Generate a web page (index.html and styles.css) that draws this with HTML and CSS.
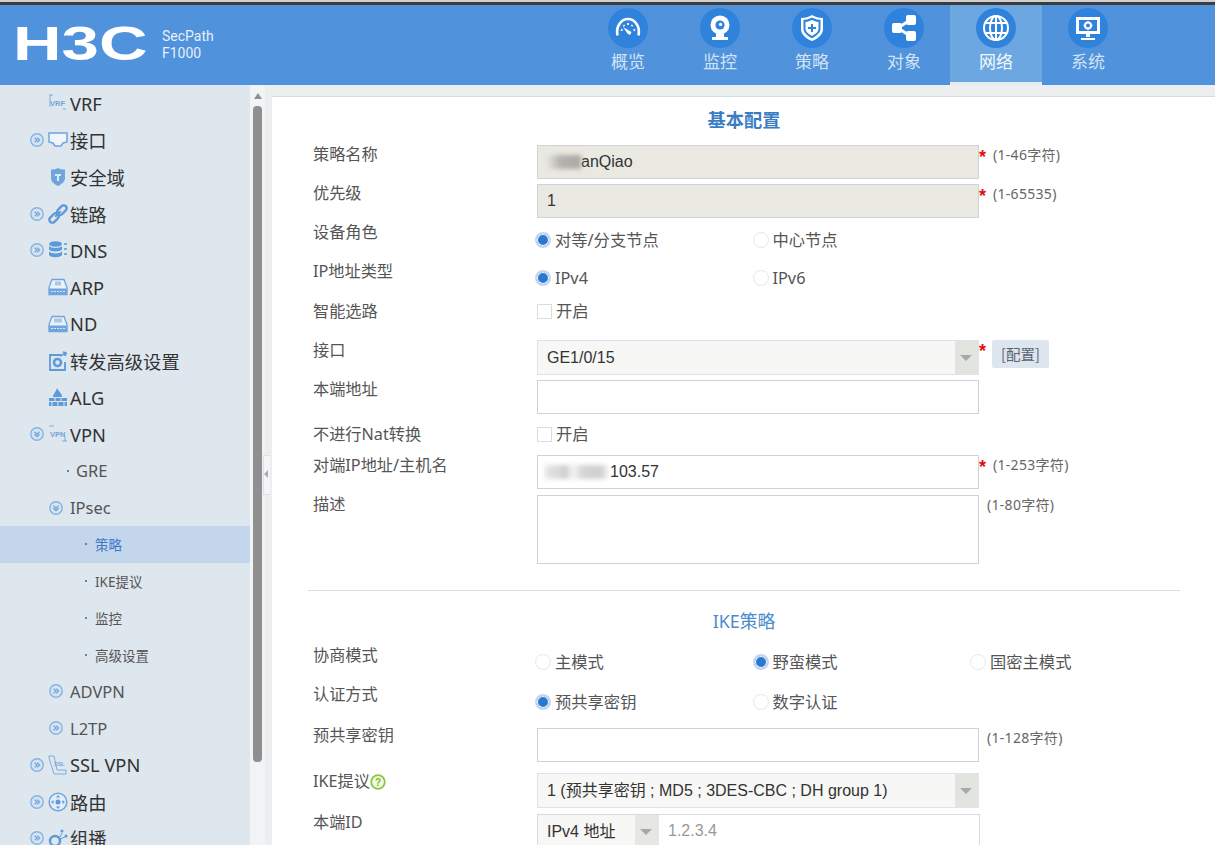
FILE: index.html
```html
<!DOCTYPE html>
<html lang="zh-CN">
<head>
  <meta charset="UTF-8" />
  <title>H3C SecPath F1000</title>
  <link rel="stylesheet" href="styles.css">
</head>
<body>
  <svg class="defs" width="0" height="0">
    <symbol id="exp-closed" viewBox="0 0 14 14">
      <circle cx="7" cy="7" r="6.2" fill="#d5e3f2" stroke="#86b4e2" stroke-width="1.4"/>
      <path d="M4.6 4.6 7 7l-2.4 2.4M7.2 4.6 9.6 7l-2.4 2.4" fill="none" stroke="#6fa5dc" stroke-width="1.3"/>
    </symbol>
    <symbol id="exp-open" viewBox="0 0 14 14">
      <circle cx="7" cy="7" r="6.2" fill="#d5e3f2" stroke="#86b4e2" stroke-width="1.4"/>
      <path d="M4.4 4.8 7 7.2l2.6-2.4M4.4 7.2 7 9.6l2.6-2.4" fill="none" stroke="#6fa5dc" stroke-width="1.3"/>
    </symbol>
  </svg>

  <header class="topbar">
    <div class="logo">
      <div class="logo-mark"><span>H3C</span></div>
      <div class="logo-model">SecPath<br>F1000</div>
    </div>
    <nav class="nav">
      <a class="nav-item">
        <span class="nav-icon"><svg viewBox="0 0 28 28" width="28" height="28"><path d="M3.500 21.500C1.500 12 7.500 5 14 5s12.500 7 10.500 16.500" fill="none" stroke="#fff" stroke-width="2.600"/><path d="M7 15.500l1.500 1M9.500 11l1 1.200M14 9v2M18.500 11l-1 1.200M21 15.500l-1.500 1" stroke="#fff" stroke-width="1.800"/><path d="M9 13l8.500 5-1.500 3-2.500-1.500z" fill="#fff"/></svg></span>
        <span class="nav-text">概览</span>
      </a>
      <a class="nav-item">
        <span class="nav-icon"><svg viewBox="0 0 28 28" width="28" height="28"><circle cx="14" cy="11" r="9.500" fill="#fff"/><circle cx="14" cy="11" r="4.600" fill="#2f83dc"/><circle cx="14.600" cy="10.400" r="1.700" fill="#fff"/><path d="M10 20h8v3h4v3H6v-3h4z" fill="#fff"/></svg></span>
        <span class="nav-text">监控</span>
      </a>
      <a class="nav-item">
        <span class="nav-icon"><svg viewBox="0 0 28 28" width="28" height="28"><path d="M14 1c3 2 7 3 11 3v11c0 6-6 10-11 12C9 25 3 21 3 15V4c4 0 8-1 11-3z" fill="#fff"/><path d="M14 3.500c3 1.600 5.500 2.300 8.500 2.500V15c0 4-4.500 7-8.500 9.300C10 22 5.500 19 5.500 15V6c3-.2 5.500-.9 8.500-2.500z" fill="#2f83dc"/><path d="M14 6c2.500 1.200 4 1.700 6.500 2v7c0 3-3.500 5.200-6.500 7-3-1.800-6.500-4-6.500-7V8c2.500-.3 4-.8 6.500-2z" fill="#fff"/><path d="M14 10v8M10 14h8" stroke="#2f83dc" stroke-width="2"/></svg></span>
        <span class="nav-text">策略</span>
      </a>
      <a class="nav-item">
        <span class="nav-icon"><svg viewBox="0 0 28 28" width="28" height="28"><path d="M8 14 20 6M8 14l12 8" stroke="#fff" stroke-width="3"/><rect x="2" y="9" width="10" height="10" rx="2" fill="#fff"/><rect x="16" y="1" width="10" height="10" rx="2" fill="#fff"/><rect x="16" y="17" width="10" height="10" rx="2" fill="#fff"/></svg></span>
        <span class="nav-text">对象</span>
      </a>
      <a class="nav-item active">
        <span class="nav-icon"><svg viewBox="0 0 28 28" width="28" height="28" fill="none" stroke="#fff" stroke-width="2"><circle cx="14" cy="14" r="12"/><ellipse cx="14" cy="14" rx="6" ry="12"/><path d="M14 2v24M3.500 9h21M3.500 19h21"/></svg></span>
        <span class="nav-text">网络</span>
      </a>
      <a class="nav-item">
        <span class="nav-icon"><svg viewBox="0 0 28 28" width="28" height="28"><path d="M2 3h24v17H2z" fill="#fff"/><path d="M5 6h18v11H5z" fill="#2f83dc"/><path d="M12 20h4v3h-4zM7 24h14v2H7z" fill="#fff"/><circle cx="14" cy="11.500" r="3" fill="none" stroke="#fff" stroke-width="2"/><path d="M14 7v2M14 14v2M9.500 11.500h2M16.500 11.500h2" stroke="#fff" stroke-width="1.500"/></svg></span>
        <span class="nav-text">系统</span>
      </a>
    </nav>
  </header>

  <div class="body-wrap">
    <aside class="sidebar">
      <div class="item lv1">
        <span class="exp"></span>
        <svg class="ico" viewBox="0 0 20 20"><path d="M1 2h4M15 16h3M2 2v12" stroke="#7fadd8" fill="none"/><text x="2" y="13" class="ico-txt">VRF</text></svg>
        <span>VRF</span>
      </div>
      <div class="item lv1">
        <svg class="exp"><use href="#exp-closed"/></svg>
        <svg class="ico" viewBox="0 0 20 20"><path d="M1 3h18v9l-4 1-2 3H7l-2-3-4-1z" fill="#f0f5fa" stroke="#6fa5dc" stroke-width="1.500"/></svg>
        <span>接口</span>
      </div>
      <div class="item lv1">
        <span class="exp"></span>
        <svg class="ico" viewBox="0 0 20 20"><path d="M10 1c2 1 4 1.500 7 1.500V11c0 4-4 6.500-7 8-3-1.500-7-4-7-8V2.500C6 2.500 8 2 10 1z" fill="#6fa5dc"/><path d="M7 7h6v2h-2v5H9V9H7z" fill="#dce8f4"/></svg>
        <span>安全域</span>
      </div>
      <div class="item lv1">
        <svg class="exp"><use href="#exp-closed"/></svg>
        <svg class="ico" viewBox="0 0 20 20" fill="none" stroke="#5d9ad8" stroke-width="2.400"><g transform="rotate(-45 10 10)"><rect x="-1" y="7" width="11" height="6" rx="3"/><rect x="10" y="7" width="11" height="6" rx="3"/><path d="M6 10h8" stroke-width="2"/></g></svg>
        <span>链路</span>
      </div>
      <div class="item lv1">
        <svg class="exp"><use href="#exp-closed"/></svg>
        <svg class="ico" viewBox="0 0 20 20"><ellipse cx="7.500" cy="4" rx="6.500" ry="2.800" fill="#5d9ad8"/><path d="M1 6c2 2.500 11 2.500 13 0v3.500c-2 2.500-11 2.500-13 0zM1 11.500c2 2.500 11 2.500 13 0V15c-2 3-11 3-13 0z" fill="#5d9ad8"/><path d="M16 3h3v2h-3zM16 8h3v2h-3zM16 13h3v2h-3z" fill="#7fadd8"/></svg>
        <span>DNS</span>
      </div>
      <div class="item lv1">
        <span class="exp"></span>
        <svg class="ico" viewBox="0 0 20 20"><path d="M4 2.500h12l3 8v7H1v-7z" fill="#eaf1f8" stroke="#6fa5dc" stroke-width="1.300"/><path d="M7 4.500h6v4H7z" fill="#a9c8e8"/><path d="M1 11.500h18v6H1z" fill="#6fa5dc"/><path d="M3 14.500h14" stroke="#dce8f4" stroke-dasharray="2 1"/></svg>
        <span>ARP</span>
      </div>
      <div class="item lv1">
        <span class="exp"></span>
        <svg class="ico" viewBox="0 0 20 20"><path d="M4 2.500h12l3 8v7H1v-7z" fill="#eaf1f8" stroke="#6fa5dc" stroke-width="1.300"/><path d="M6 4.500h8v4H6z" fill="#a9c8e8"/><path d="M1 11.500h18v6H1z" fill="#6fa5dc"/><path d="M3 14.500h14" stroke="#dce8f4" stroke-dasharray="2 1"/></svg>
        <span>ND</span>
      </div>
      <div class="item lv1">
        <span class="exp"></span>
        <svg class="ico" viewBox="0 0 20 20" fill="none" stroke="#5d9ad8" stroke-width="1.800"><path d="M13 4H2v15h15v-8"/><path d="M12 5l6-3M15 1l3 1-1 3"/><circle cx="9.500" cy="11.500" r="3.500" stroke-width="2.600"/></svg>
        <span>转发高级设置</span>
      </div>
      <div class="item lv1">
        <span class="exp"></span>
        <svg class="ico" viewBox="0 0 20 20"><path d="M9 1c1 3 5 5 5 9H5c0-3 3-5 4-9z" fill="#5d9ad8"/><path d="M1 11h18v3H1zM1 15h18v4H1z" fill="#5d9ad8"/><path d="M7 11v3M13 11v3M4 15v4M10 15v4M16 15v4" stroke="#dee6ee"/></svg>
        <span>ALG</span>
      </div>
      <div class="item lv1">
        <svg class="exp"><use href="#exp-open"/></svg>
        <svg class="ico" viewBox="0 0 20 20"><path d="M1 2h5M14 17h5M17 13v4" stroke="#7fadd8" fill="none"/><text x="2" y="13" class="ico-txt">VPN</text></svg>
        <span>VPN</span>
      </div>
      <div class="item lv2 dotted"><i class="dot"></i><span>GRE</span></div>
      <div class="item lv2">
        <svg class="exp"><use href="#exp-open"/></svg>
        <span>IPsec</span>
      </div>
      <div class="item lv3 current"><i class="dot"></i><span>策略</span></div>
      <div class="item lv3"><i class="dot"></i><span>IKE提议</span></div>
      <div class="item lv3"><i class="dot"></i><span>监控</span></div>
      <div class="item lv3"><i class="dot"></i><span>高级设置</span></div>
      <div class="item lv2">
        <svg class="exp"><use href="#exp-closed"/></svg>
        <span>ADVPN</span>
      </div>
      <div class="item lv2">
        <svg class="exp"><use href="#exp-closed"/></svg>
        <span>L2TP</span>
      </div>
      <div class="item lv1">
        <svg class="exp"><use href="#exp-closed"/></svg>
        <svg class="ico" viewBox="0 0 20 20"><path d="M1 1h5l3 14h9v4H6L1 3z" fill="none" stroke="#7fadd8"/><text x="6" y="11" class="ico-txt ico-small">SSL</text></svg>
        <span>SSL VPN</span>
      </div>
      <div class="item lv1">
        <svg class="exp"><use href="#exp-closed"/></svg>
        <svg class="ico" viewBox="0 0 20 20"><circle cx="10" cy="10" r="8.800" fill="#e3edf7" stroke="#6fa5dc" stroke-width="1.500"/><circle cx="10" cy="10" r="2.500" fill="#5d9ad8"/><path d="M10 3l2 2.500H8zM10 17l2-2.500H8zM3 10l2.500-2v4zM17 10l-2.500-2v4z" fill="#5d9ad8"/></svg>
        <span>路由</span>
      </div>
      <div class="item lv1">
        <svg class="exp"><use href="#exp-closed"/></svg>
        <svg class="ico" viewBox="0 0 20 20"><circle cx="7" cy="13" r="5" fill="none" stroke="#5d9ad8" stroke-width="2.400"/><circle cx="14" cy="3" r="1.500" fill="#5d9ad8"/><circle cx="18" cy="8" r="1.500" fill="#5d9ad8"/><path d="M12 9l2-4M12 11l5-2" stroke="#5d9ad8"/></svg>
        <span>组播</span>
      </div>
    </aside>

    <div class="scroll-track">
      <i class="scroll-up"></i>
      <i class="scroll-thumb"></i>
    </div>

    <main class="content">
      <i class="split-handle"></i>
      <div class="panel">
        <h3 class="section-title">基本配置</h3>

        <div class="row">
          <label>策略名称</label>
          <div class="field readonly"><span class="smudge smudge-a"></span>anQiao</div>
          <div class="hint"><b>*</b><span>(1-46字符)</span></div>
        </div>
        <div class="row">
          <label>优先级</label>
          <div class="field readonly">1</div>
          <div class="hint"><b>*</b><span>(1-65535)</span></div>
        </div>
        <div class="row">
          <label>设备角色</label>
          <div class="options pad8">
            <span class="opt"><i class="radio on"></i>对等/分支节点</span>
            <span class="opt"><i class="radio"></i>中心节点</span>
          </div>
        </div>
        <div class="row">
          <label>IP地址类型</label>
          <div class="options pad7">
            <span class="opt"><i class="radio on"></i>IPv4</span>
            <span class="opt"><i class="radio"></i>IPv6</span>
          </div>
        </div>
        <div class="row">
          <label class="lower">智能选路</label>
          <div class="options pad1">
            <span class="opt"><i class="check"></i>开启</span>
          </div>
        </div>
        <div class="row h40">
          <label class="lower">接口</label>
          <div class="select">
            <div class="select-value">GE1/0/15</div>
            <i class="select-arrow"></i>
          </div>
          <div class="hint hint-btn"><b>*</b><button class="btn-config">[配置]</button></div>
        </div>
        <div class="row h45">
          <label>本端地址</label>
          <input class="field" type="text" />
        </div>
        <div class="row h30">
          <label>不进行Nat转换</label>
          <div class="options">
            <span class="opt"><i class="check"></i>开启</span>
          </div>
        </div>
        <div class="row h40">
          <label class="lower">对端IP地址/主机名</label>
          <div class="field"><span class="smudge smudge-b"></span>103.57</div>
          <div class="hint"><b>*</b><span>(1-253字符)</span></div>
        </div>
        <div class="row h95">
          <label>描述</label>
          <textarea class="field area"></textarea>
          <div class="hint plain"><span>(1-80字符)</span></div>
        </div>

        <hr class="divider" />
        <h4 class="section-sub">IKE策略</h4>

        <div class="row">
          <label>协商模式</label>
          <div class="options pad7">
            <span class="opt"><i class="radio"></i>主模式</span>
            <span class="opt"><i class="radio on"></i>野蛮模式</span>
            <span class="opt"><i class="radio"></i>国密主模式</span>
          </div>
        </div>
        <div class="row h43">
          <label>认证方式</label>
          <div class="options pad8">
            <span class="opt"><i class="radio on"></i>预共享密钥</span>
            <span class="opt"><i class="radio"></i>数字认证</span>
          </div>
        </div>
        <div class="row h45">
          <label class="upper">预共享密钥</label>
          <input class="field" type="password" />
          <div class="hint plain"><span>(1-128字符)</span></div>
        </div>
        <div class="row h41">
          <label class="up1">IKE提议<svg class="help" viewBox="0 0 16 16"><circle cx="8" cy="8" r="6.800" fill="#f2f8e6" stroke="#8cc63f" stroke-width="1.800"/><text x="8" y="12" class="help-q">?</text></svg></label>
          <div class="select">
            <div class="select-value">1 (预共享密钥 ; MD5 ; 3DES-CBC ; DH group 1)</div>
            <i class="select-arrow"></i>
          </div>
        </div>
        <div class="row">
          <label class="up1">本端ID</label>
          <div class="id-group">
            <div class="id-type">IPv4 地址</div>
            <i class="select-arrow id-arrow"></i>
            <input class="id-input" type="text" placeholder="1.2.3.4" />
          </div>
        </div>
      </div>
    </main>
  </div>
</body>
</html>
```

FILE: styles.css
```css
* {
  box-sizing: border-box;
}
html, body {
  margin: 0;
  height: 845px;
  overflow: hidden;
}
body {
  padding-top: 2px;
  font-family: "Noto Sans", "Noto Sans CJK SC", sans-serif;
  color: #555;
  background: #cfcfcf;
}
.defs {
  position: absolute;
}

/* top bar */
.topbar {
  height: 83px;
  display: flex;
  justify-content: space-between;
  background: #5092db;
  border-top: 3px solid #3c3c3c;
}
.logo {
  display: flex;
  align-items: flex-start;
  padding: 21px 0 0 17px;
}
.logo-mark {
  width: 131px;
  height: 36px;
  font-family: "Liberation Sans", sans-serif;
  font-weight: bold;
  font-size: 48px;
  line-height: 36px;
  color: #fff;
}
.logo-mark span {
  display: inline-block;
  margin-left: -4px;
  transform: scaleX(1.4);
  transform-origin: left center;
}
.logo-model {
  margin: 2px 0 0 14px;
  font-family: Roboto, sans-serif;
  font-size: 14px;
  line-height: 16.5px;
  color: #e6f0fa;
}
.nav {
  display: flex;
  margin-right: 81px;
}
.nav-item {
  width: 92px;
  height: 80px;
  padding-top: 3px;
  display: flex;
  flex-direction: column;
  align-items: center;
  font-size: 17px;
  line-height: 24px;
  color: #d2e3f6;
}
.nav-item.active {
  background: #6da7e2;
  border-bottom: 3px solid #e8ecf0;
  color: #f2f7fc;
}
.nav-icon {
  width: 40px;
  height: 40px;
  display: flex;
  align-items: center;
  justify-content: center;
  border-radius: 50%;
  background: #2f83dc;
}
.nav-text {
  margin-top: 2px;
}

/* main layout */
.body-wrap {
  display: flex;
  height: 760px;
  background: #eceef0;
}
.sidebar {
  width: 250px;
  flex: none;
  overflow: hidden;
  background: #dee6ee;
}
.item {
  height: 36.75px;
  display: flex;
  align-items: center;
  white-space: nowrap;
}
.exp {
  width: 14px;
  height: 14px;
  flex: none;
}
.ico {
  width: 20px;
  height: 20px;
  margin: 0 2px 0 4px;
  flex: none;
}
.ico-txt {
  font-family: "Liberation Sans", sans-serif;
  font-size: 7.5px;
  font-weight: bold;
  fill: #6fa5dc;
}
.ico-small {
  font-size: 5.5px;
}
.lv1 {
  padding-left: 30px;
  font-size: 18.3px;
  color: #333;
}
.lv2 {
  padding-left: 49px;
  font-size: 16.5px;
  color: #555;
}
.lv2 .exp {
  margin-right: 7px;
}
.lv2.dotted {
  padding-left: 67px;
}
.lv3 {
  padding-left: 85px;
  font-size: 13.5px;
  color: #555;
}
.dot {
  width: 2px;
  height: 2px;
  margin-right: 8px;
  background: #4a86c8;
  flex: none;
}
.lv2.dotted .dot {
  margin-right: 7px;
}
.current {
  background: #c3d6eb;
  color: #3f78c9;
}

/* scrollbar */
.scroll-track {
  width: 15px;
  flex: none;
  padding: 8px 3px 0;
  background: #f2f3f4;
}
.scroll-up {
  display: block;
  width: 0;
  height: 0;
  margin: 0 auto 7px;
  border: 4px solid transparent;
  border-top: 0;
  border-bottom: 6px solid #8f8f8f;
}
.scroll-thumb {
  display: block;
  width: 9px;
  height: 656px;
  border-radius: 4px;
  background: #8f8f8f;
}

/* content panel */
.content {
  position: relative;
  flex: 1;
  padding: 11px 0 0 7px;
}
.split-handle {
  position: absolute;
  left: -2px;
  top: 370px;
  width: 7px;
  height: 40px;
  background: #f4f5f6;
  border: 1px solid #dfe2e5;
  border-right: 0;
}
.split-handle::after {
  content: "";
  position: absolute;
  left: 0;
  top: 14px;
  border: 4px solid transparent;
  border-left: 0;
  border-right: 4px solid #a9adb2;
}
.panel {
  height: 760px;
  padding: 0 35px 0 36px;
  background: #fff;
  border-top: 1px solid #d9dcdf;
}
.section-title {
  height: 48px;
  margin: 0;
  width: 872px;
  padding-top: 10px;
  text-align: center;
  font-size: 18.2px;
  line-height: 26px;
  font-weight: bold;
  color: #3a7dc4;
}
.section-sub {
  height: 55px;
  margin: 0;
  width: 872px;
  padding-top: 17px;
  text-align: center;
  font-size: 17.8px;
  line-height: 26px;
  font-weight: normal;
  color: #4a8ccc;
}
.divider {
  width: 872px;
  height: 1px;
  margin: 0;
  border: 0;
  background: #dcdcdc;
}
.row {
  display: grid;
  grid-template-columns: 224px 442px auto;
  width: 872px;
  height: 39px;
  padding-left: 5px;
  align-items: start;
}
.h30 { height: 30px; }
.h40 { height: 40px; }
.h41 { height: 41px; }
.h43 { height: 43px; }
.h45 { height: 45px; }
.h95 { height: 95px; }
.row label {
  display: flex;
  align-items: center;
  font-size: 16.2px;
  line-height: 18px;
}
.row label.lower { margin-top: 1px; }
.row label.upper { margin-top: -2px; }
.row label.up1 { margin-top: -1px; }
.help {
  width: 16px;
  height: 16px;
  margin-top: 2px;
}
.help-q {
  font-family: "Liberation Sans", sans-serif;
  font-size: 10px;
  font-weight: bold;
  text-anchor: middle;
  fill: #7cb82f;
}
.field {
  display: flex;
  align-items: center;
  width: 442px;
  height: 34px;
  margin: 0;
  padding: 0 9px;
  font-family: "Liberation Sans", sans-serif;
  font-size: 16px;
  color: #333;
  background: #fff;
  border: 1px solid #cfd3d6;
  outline: 0;
}
.field.readonly {
  background: #e9e9e1;
}
.area {
  height: 69px;
  resize: none;
}
.smudge {
  display: inline-block;
  height: 14px;
  filter: blur(2px);
  flex: none;
}
.smudge-a {
  width: 34px;
  background: linear-gradient(90deg, #e4e4de, #b4b2ac 40%, #aaa8a2 100%);
}
.smudge-b {
  width: 63px;
  margin-left: -2px;
  margin-right: 2px;
  background: linear-gradient(90deg, #e6e6e6 0, #d0d0d0 33%, #f4f4f4 45%, #d4d4d4 60%, #cfcfcf 88%, #eee 100%);
}
.hint {
  display: flex;
  font-size: 14px;
  line-height: 20px;
  letter-spacing: .3px;
  color: #666;
}
.hint b {
  width: 8px;
  margin: 2px 6px 0 0;
  color: #e01010;
  font-size: 18px;
  font-weight: bold;
  font-family: "Liberation Sans", sans-serif;
}
.hint.plain {
  padding-left: 8px;
}
.hint-btn {
  align-items: flex-start;
}
.hint-btn b {
  margin: 1px 5px 0 0;
}
.btn-config {
  width: 57px;
  height: 28px;
  margin: 0;
  padding: 0;
  font: 14.5px/26px "Noto Sans CJK SC", sans-serif;
  color: #5a6470;
  background: #dde5ee;
  border: 0;
  border-radius: 2px;
}
.options {
  display: grid;
  grid-template-columns: repeat(3, 217.500px);
  width: 660px;
  font-size: 16.3px;
  line-height: 18px;
}
.pad1 { padding-top: 1px; }
.pad7 { padding-top: 7px; }
.pad8 { padding-top: 8px; }
.opt {
  display: flex;
  align-items: center;
  white-space: nowrap;
}
.radio {
  width: 16px;
  height: 16px;
  margin: 0 4px 0 -2px;
  border-radius: 50%;
  background: #fff;
  border: 1px solid #e6e8ea;
  flex: none;
}
.radio.on {
  border: 2px solid #c3d8ee;
  background: #2a78d0;
  box-shadow: inset 0 0 0 1px #fff;
}
.check {
  width: 15px;
  height: 15px;
  margin-right: 4px;
  background: #fff;
  border: 1px solid #dcdcdc;
  flex: none;
}
.select {
  display: flex;
  width: 442px;
  height: 35px;
  background: #f7f7f5;
  border: 1px solid #dfe2e8;
  border-right: 0;
}
.select-value {
  flex: 1;
  padding-left: 9px;
  font-family: "Liberation Sans", "Noto Sans CJK SC", sans-serif;
  font-size: 16px;
  line-height: 33px;
  color: #333;
}
.select-arrow {
  position: relative;
  width: 24px;
  flex: none;
  background: #e2e4e0;
}
.select-arrow::after {
  content: "";
  position: absolute;
  left: 5px;
  top: 14px;
  border: 6px solid transparent;
  border-top: 6px solid #a8a8a8;
  border-bottom: 0;
}
.id-group {
  display: flex;
  width: 443px;
  height: 40px;
  border: 1px solid #d8dade;
}
.id-type {
  width: 97px;
  padding-left: 9px;
  font-family: "Liberation Sans", "Noto Sans CJK SC", sans-serif;
  font-size: 16px;
  line-height: 33px;
  color: #333;
  background: #f7f7f5;
}
.id-arrow {
  background: #e6e7e5;
}
.id-input {
  flex: 1;
  min-width: 0;
  height: 32px;
  padding: 0 9px;
  font-family: "Liberation Sans", sans-serif;
  font-size: 16px;
  border: 0;
  outline: 0;
}
.id-input::placeholder {
  color: #999;
}
```
